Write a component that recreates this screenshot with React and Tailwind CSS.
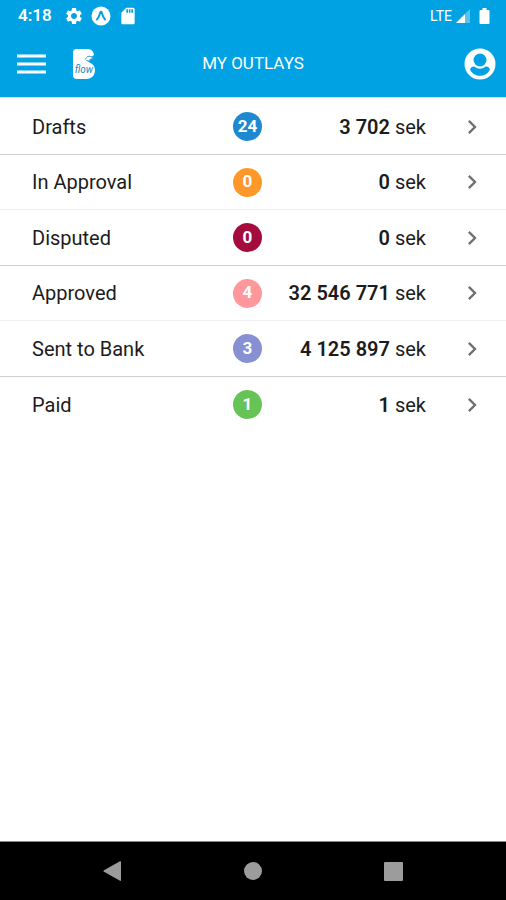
import React from "react";
import { MdSettings, MdSdCard, MdChevronRight } from "react-icons/md";

const outlays = [
  { name: "Drafts", count: 24, amount: "3 702", color: "bg-[#1e88d0]" },
  { name: "In Approval", count: 0, amount: "0", color: "bg-[#ff9829]" },
  { name: "Disputed", count: 0, amount: "0", color: "bg-[#a30c3c]" },
  { name: "Approved", count: 4, amount: "32 546 771", color: "bg-[#ff989c]" },
  { name: "Sent to Bank", count: 3, amount: "4 125 897", color: "bg-[#8890d4]" },
  { name: "Paid", count: 1, amount: "1", color: "bg-[#66c456]" },
];

const StatusBar = () => (
  <div className="flex h-8 items-center justify-between pl-[18px] pr-4">
    <div className="flex items-center">
      <span className="w-[46px] text-[17px] font-semibold">4:18</span>
      <MdSettings className="size-5" />
      <svg viewBox="0 0 20 20" className="ml-[7px] size-5">
        <circle cx="10" cy="10" r="9.5" fill="#fff" />
        <path
          d="M6 13.5c1.8-1.8 2.6-4.4 3.4-7.2.2-.7 1-.7 1.2 0 .8 2.8 1.6 5.4 3.4 7.2"
          fill="none"
          stroke="#00a2e4"
          strokeWidth="2"
          strokeLinecap="round"
        />
      </svg>
      <MdSdCard className="ml-[7px] size-5" />
    </div>
    <div className="flex items-center">
      <span className="text-sm">LTE</span>
      <svg viewBox="0 0 16 16" className="ml-[3px] size-4">
        <path d="M15 1v14H1z" fill="#fff" opacity="0.35" />
        <path d="M10 6v9H1z" fill="#fff" />
      </svg>
      <svg viewBox="0 0 10 16" className="ml-2 h-4 w-[11px]">
        <path d="M3 0h4v2h2a1 1 0 0 1 1 1v12a1 1 0 0 1-1 1H1a1 1 0 0 1-1-1V3a1 1 0 0 1 1-1h2z" fill="#fff" />
      </svg>
    </div>
  </div>
);

const Logo = () => (
  <svg viewBox="0 0 24 32" className="ml-[26px] h-8 w-6" role="img" aria-label="flow">
    <path
      d="M5 1h10c4 0 6.500 2 7 6l-2 1.500c-3-1.500-6 0-6 3 0 3 9 2.500 9 10.500 0 6-4 9-9 9H5c-3 0-4-1.500-4-4V5c0-2.500 1-4 4-4z"
      fill="#fff"
    />
    <path
      d="M13.500 11.500c.5-3 3.500-4 6-2.500l2.500 1.500-3 .5c-1 0-1.500 1-1 2"
      fill="#fff"
      stroke="#3f9bcf"
      strokeWidth="1"
    />
    <text
      x="12"
      y="25"
      textAnchor="middle"
      fill="#1787c4"
      className="font-['Roboto',sans-serif] text-[10px] italic"
    >
      flow
    </text>
  </svg>
);

const Header = () => (
  <div className="grid h-[65px] grid-cols-[1fr_auto_1fr] items-center px-[10px] pb-px">
    <div className="flex items-center pl-[6px]">
      <button aria-label="Menu">
        <svg viewBox="0 0 30 22" className="h-[22px] w-[30px]">
          <path d="M1 3h29M1 11h29M1 19h29" stroke="#fff" strokeWidth="3" />
        </svg>
      </button>
      <Logo />
    </div>
    <h1 className="text-[17px]">MY OUTLAYS</h1>
    <button aria-label="Profile" className="justify-self-end">
      <svg viewBox="0 0 32 32" className="size-8">
        <circle cx="16" cy="16" r="15.500" fill="#fff" />
        <circle cx="16" cy="12" r="6.500" fill="#00a2e4" />
        <path
          d="M6 21.500c.8-2 2.500-3.300 4.500-2.800 3.500 2.600 7.500 2.600 11 0 2-.5 3.700.8 4.500 2.800-2 4-5.500 6.300-10 6.300S8 25.500 6 21.500z"
          fill="#00a2e4"
        />
      </svg>
    </button>
  </div>
);

const App = () => {
  return (
    <div className="flex min-h-screen flex-col bg-white font-['Roboto',sans-serif] text-[#1c1c1c]">
      <header className="border-b border-[#c4e8f8] bg-[#00a2e4] text-white">
        <StatusBar />
        <Header />
      </header>

      <main className="flex-1 pt-px">
        <ul>
          {outlays.map((item) => (
            <li
              key={item.name}
              className="border-b odd:h-14 odd:border-[#cfcfcf] even:h-[55px] even:border-[#f0f0f0] last:border-b-0"
            >
              <button className="flex h-full w-full items-center pl-8 pr-5 text-left text-xl">
                <span className="flex-1">{item.name}</span>
                <span
                  className={`flex size-[29px] items-center justify-center rounded-full text-[17px] font-bold text-white ${item.color}`}
                >
                  {item.count}
                </span>
                <span className="w-[164px] text-right">
                  <span className="font-semibold">{item.amount}</span> sek
                </span>
                <MdChevronRight className="ml-8 size-7 text-[#707070]" />
              </button>
            </li>
          ))}
        </ul>
      </main>

      <nav className="flex h-[59px] items-center justify-around border-t border-[#888] bg-black px-[42px]">
        <button aria-label="Back">
          <svg viewBox="0 0 20 20" className="size-5">
            <path d="M18 0.500v19a.8.8 0 0 1-1 .3L1 10.800a1 1 0 0 1 0-1.600L17 .2z" fill="#9c9c9c" />
          </svg>
        </button>
        <button aria-label="Home" className="size-[18px] rounded-full bg-[#9c9c9c]"></button>
        <button aria-label="Recent apps" className="size-[19px] rounded-[1px] bg-[#9c9c9c]"></button>
      </nav>
    </div>
  );
};

export default App;
